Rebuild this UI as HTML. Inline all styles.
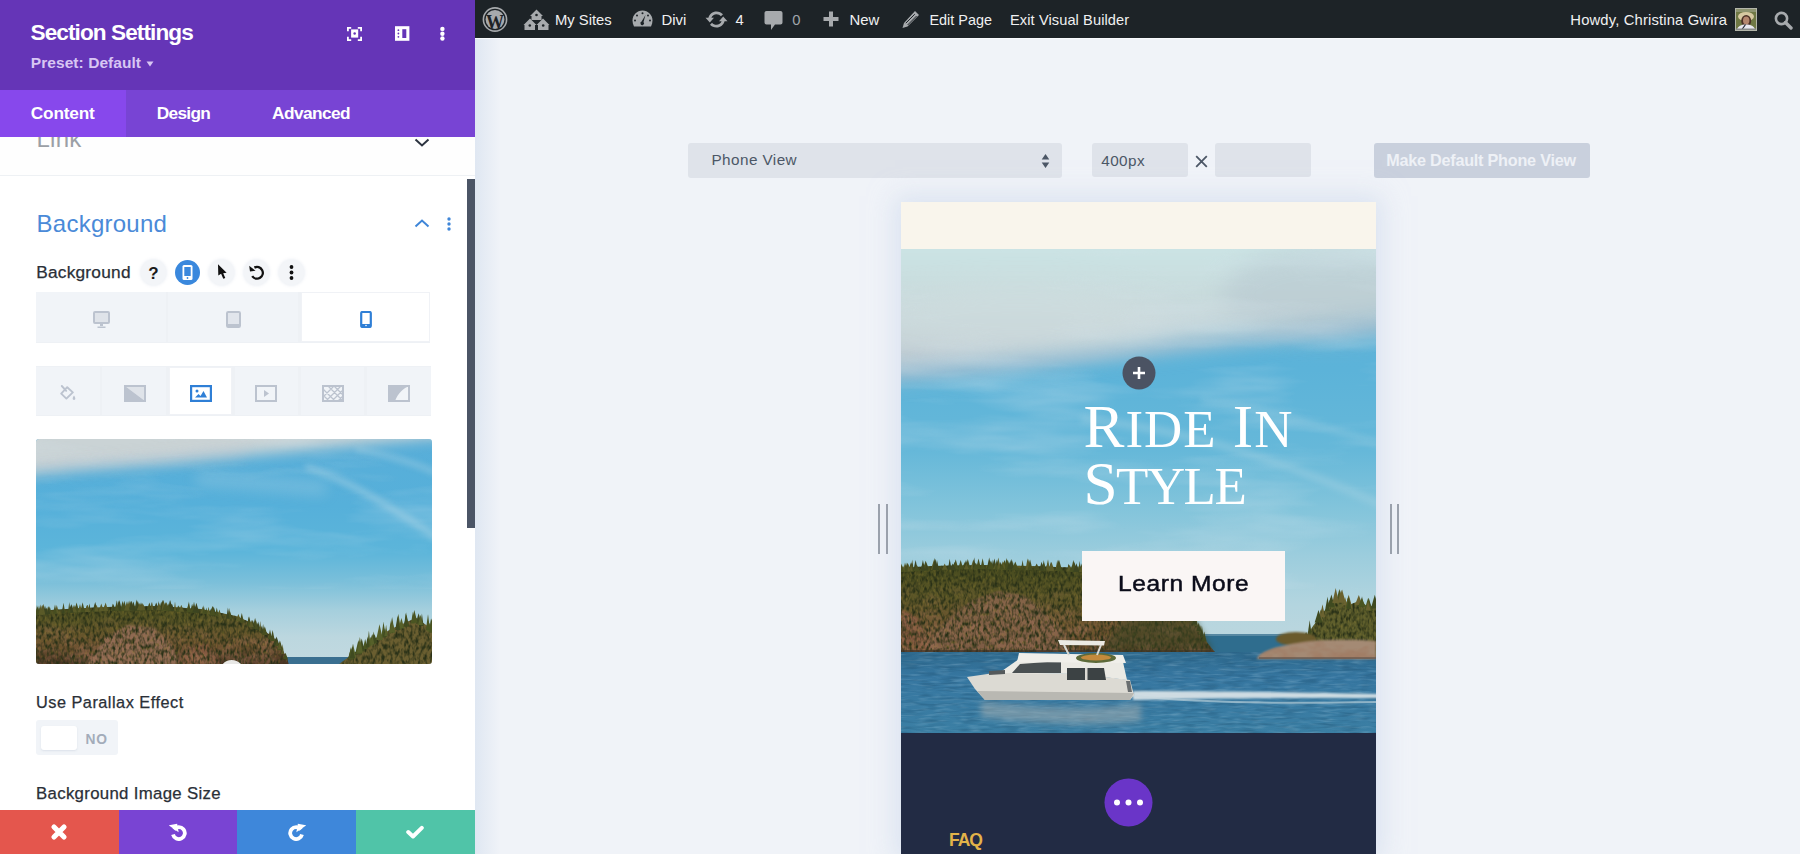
<!DOCTYPE html><html><head><meta charset="utf-8"><style>
html,body{margin:0;padding:0;width:1800px;height:854px;overflow:hidden;background:#f0f3f8;}
.t{position:absolute;white-space:nowrap;line-height:1;}
.r{position:absolute;}
</style></head><body>
<div class="r" style="left:475px;top:38px;width:25px;height:816px;background:linear-gradient(90deg,#dfe7f2,#f0f3f8);"></div>
<div class="r" style="left:475px;top:0px;width:1325px;height:38px;background:#1d2327;"></div>
<div class="r" style="left:475px;top:38px;width:1325px;height:1px;background:#f8fafd;"></div>
<div class="t" style="left:555.00px;top:13.07px;font-size:14.80px;font-weight:400;color:#f0f0f1;letter-spacing:0.00px;font-family:'Liberation Sans';">My Sites</div>
<div class="t" style="left:661.50px;top:12.99px;font-size:14.90px;font-weight:400;color:#f0f0f1;letter-spacing:0.00px;font-family:'Liberation Sans';">Divi</div>
<div class="t" style="left:735.50px;top:13.07px;font-size:14.80px;font-weight:400;color:#f0f0f1;letter-spacing:0.00px;font-family:'Liberation Sans';">4</div>
<div class="t" style="left:792.30px;top:13.07px;font-size:14.80px;font-weight:400;color:#a0a5aa;letter-spacing:0.00px;font-family:'Liberation Sans';">0</div>
<div class="t" style="left:849.50px;top:12.99px;font-size:14.90px;font-weight:400;color:#f0f0f1;letter-spacing:0.00px;font-family:'Liberation Sans';">New</div>
<div class="t" style="left:929.50px;top:13.21px;font-size:14.40px;font-weight:400;color:#f0f0f1;letter-spacing:0.00px;font-family:'Liberation Sans';">Edit Page</div>
<div class="t" style="left:1010.00px;top:13.04px;font-size:14.60px;font-weight:400;color:#f0f0f1;letter-spacing:0.10px;font-family:'Liberation Sans';">Exit Visual Builder</div>
<div class="t" style="left:1570.30px;top:12.87px;font-size:14.80px;font-weight:400;color:#f0f0f1;letter-spacing:0.15px;font-family:'Liberation Sans';">Howdy, Christina Gwira</div>
<svg class="r" style="left:482px;top:7px;" width="26" height="26" viewBox="0 0 26 26"><circle cx="13" cy="12.5" r="11.6" fill="none" stroke="#a7aaad" stroke-width="1.6"/><circle cx="13" cy="12.5" r="9.4" fill="#a7aaad"/><text x="4" y="21.5" font-family="Liberation Serif" font-weight="700" font-size="22" fill="#1d2327" textLength="18" lengthAdjust="spacingAndGlyphs">W</text></svg>
<svg class="r" style="left:523px;top:9px;" width="27" height="22" viewBox="0 0 27 22"><path d="M13.5 0.5 L20 7 L18.5 7 L18.5 11 L8.5 11 L8.5 7 L7 7 Z" fill="#a7aaad"/><circle cx="13.5" cy="6" r="1.3" fill="#1d2327"/><path d="M7 9.5 L13.5 16 L12 16 L12 21 L1.5 21 L1.5 16 L0.5 16 Z" fill="#a7aaad"/><circle cx="6.8" cy="16.5" r="1.3" fill="#1d2327"/><path d="M20 9.5 L26.5 16 L25.5 16 L25.5 21 L15 21 L15 16 L13.5 16 Z" fill="#a7aaad"/><circle cx="20.2" cy="16.5" r="1.3" fill="#1d2327"/></svg>
<svg class="r" style="left:632px;top:10px;" width="21" height="17" viewBox="0 0 21 17"><path d="M10.5 0.5 C16 0.5 20.5 5 20.5 10.5 C20.5 12.5 20 14.5 19 16.5 L2 16.5 C1 14.5 0.5 12.5 0.5 10.5 C0.5 5 5 0.5 10.5 0.5Z" fill="#a7aaad"/><circle cx="10.5" cy="3.2" r="1" fill="#1d2327"/><circle cx="5" cy="5.5" r="1" fill="#1d2327"/><circle cx="16" cy="5.5" r="1" fill="#1d2327"/><circle cx="3" cy="10.5" r="1" fill="#1d2327"/><circle cx="18" cy="10.5" r="1" fill="#1d2327"/><path d="M13.5 5 L11.5 12 A1.8 1.8 0 1 1 9.6 11.6 Z" fill="#1d2327"/></svg>
<svg class="r" style="left:705px;top:10px;" width="23" height="19" viewBox="0 0 23 19"><path d="M11.5 1.5 C7.5 1.5 4.3 4.2 3.4 7.8 L0.5 7.8 L4.8 12.5 L9 7.8 L6.4 7.8 C7.2 5.6 9.2 4.2 11.5 4.2 C13.3 4.2 14.9 5 15.9 6.3 L18 4.3 C16.4 2.6 14.1 1.5 11.5 1.5Z" fill="#a7aaad"/><path d="M11.5 17.5 C15.5 17.5 18.7 14.8 19.6 11.2 L22.5 11.2 L18.2 6.5 L14 11.2 L16.6 11.2 C15.8 13.4 13.8 14.8 11.5 14.8 C9.7 14.8 8.1 14 7.1 12.7 L5 14.7 C6.6 16.4 8.9 17.5 11.5 17.5Z" fill="#a7aaad"/></svg>
<svg class="r" style="left:764px;top:10px;" width="19" height="21" viewBox="0 0 19 21"><path d="M2.5 1 L16.5 1 C17.6 1 18.5 1.9 18.5 3 L18.5 12.5 C18.5 13.6 17.6 14.5 16.5 14.5 L11 14.5 L7 20 L7 14.5 L2.5 14.5 C1.4 14.5 0.5 13.6 0.5 12.5 L0.5 3 C0.5 1.9 1.4 1 2.5 1Z" fill="#a7aaad"/></svg>
<svg class="r" style="left:823px;top:11px;" width="16" height="16" viewBox="0 0 16 16"><path d="M6 0.5 H10 V6 H15.5 V10 H10 V15.5 H6 V10 H0.5 V6 H6Z" fill="#a7aaad"/></svg>
<svg class="r" style="left:901px;top:10px;" width="19" height="19" viewBox="0 0 19 19"><path d="M14 1 L18 5 L6.5 16.5 L1.5 18 L3 13 Z" fill="#a7aaad"/><path d="M4.8 13.2 L13.8 4.2 M6.6 15 L15.6 6" stroke="#1d2327" stroke-width="1"/></svg>
<svg class="r" style="left:1735px;top:8px;" width="22" height="23" viewBox="0 0 22 23"><rect x="0.5" y="0.5" width="21" height="22" fill="#6f7844" stroke="#b4b6aa" stroke-width="1"/><rect x="1" y="1" width="20" height="3" fill="#8d9470"/><ellipse cx="11" cy="8.5" rx="8" ry="4.6" fill="#d6c9a2"/><ellipse cx="11.2" cy="13" rx="5" ry="6" fill="#4a3026"/><ellipse cx="11.2" cy="12.6" rx="3.2" ry="4" fill="#b4866e"/><path d="M2 21.5 C3 18 6 16.5 11 16.5 C16 16.5 19 18 20 21.5Z" fill="#e9e8f0"/><path d="M7 21.5 L10.5 16.5" stroke="#1e2230" stroke-width="1.2"/><rect x="1" y="20.5" width="20" height="1.5" fill="#8a8c8a"/></svg>
<svg class="r" style="left:1774px;top:11px;" width="19" height="19" viewBox="0 0 19 19"><circle cx="7.5" cy="7.5" r="5.6" fill="none" stroke="#a7aaad" stroke-width="2.6"/><path d="M11.5 11.5 L17 17" stroke="#a7aaad" stroke-width="3.4" stroke-linecap="round"/></svg>
<div class="r" style="left:688px;top:143px;width:374px;height:35px;background:#dfe3ea;border-radius:3px;"></div>
<div class="t" style="left:711.50px;top:151.85px;font-size:15.30px;font-weight:400;color:#4c5766;letter-spacing:0.42px;font-family:'Liberation Sans';">Phone View</div>
<svg class="r" style="left:1041px;top:153px;" width="9" height="16" viewBox="0 0 9 16"><path d="M4.5 1 L8.3 6.4 H0.7Z M4.5 15 L8.3 9.6 H0.7Z" fill="#4c5766"/></svg>
<div class="r" style="left:1092px;top:143px;width:96px;height:34px;background:#dfe3ea;border-radius:3px;"></div>
<div class="t" style="left:1101.20px;top:152.55px;font-size:15.30px;font-weight:400;color:#4c5766;letter-spacing:0.44px;font-family:'Liberation Sans';">400px</div>
<svg class="r" style="left:1195px;top:155px;" width="13" height="13" viewBox="0 0 13 13"><path d="M1.2 1.2 L11.8 11.8 M11.8 1.2 L1.2 11.8" stroke="#4c5766" stroke-width="1.8"/></svg>
<div class="r" style="left:1215px;top:143px;width:96px;height:34px;background:#dfe3ea;border-radius:3px;"></div>
<div class="r" style="left:1374px;top:143px;width:216px;height:35px;background:#c9d0dd;border-radius:3px;"></div>
<div class="t" style="left:1386.20px;top:152.29px;font-size:16.20px;font-weight:700;color:#eef1f6;letter-spacing:-0.23px;font-family:'Liberation Sans';">Make Default Phone View</div>
<div class="r" style="left:901px;top:202px;width:475px;height:652px;background:#f9f5ec;box-shadow:0 0 24px 6px rgba(200,214,235,0.55);"></div>
<svg class="r" style="left:901px;top:249px;" width="475" height="484" viewBox="0 0 475 484"><defs>
<linearGradient id="psky" x1="0" y1="0" x2="0" y2="404" gradientUnits="userSpaceOnUse">
<stop offset="0" stop-color="#5cb0d7"/><stop offset="0.3" stop-color="#5cb3d9"/><stop offset="0.5" stop-color="#66b8d9"/>
<stop offset="0.64" stop-color="#82c4db"/><stop offset="0.76" stop-color="#9ccddd"/><stop offset="0.88" stop-color="#b3d5df"/><stop offset="1" stop-color="#bfd7de"/></linearGradient>
<linearGradient id="pcl" x1="0" y1="0" x2="0" y2="135" gradientUnits="userSpaceOnUse">
<stop offset="0" stop-color="#cbe4e5"/><stop offset="0.3" stop-color="#c9dcdd"/><stop offset="0.65" stop-color="#c3d0d4"/><stop offset="1" stop-color="#b9c1cd"/></linearGradient>
<linearGradient id="pwat" x1="0" y1="403" x2="0" y2="484" gradientUnits="userSpaceOnUse">
<stop offset="0" stop-color="#2f6a8e"/><stop offset="0.3" stop-color="#3676a0"/><stop offset="1" stop-color="#3b7fa4"/></linearGradient>
<linearGradient id="pisl" x1="0" y1="316" x2="0" y2="404" gradientUnits="userSpaceOnUse">
<stop offset="0" stop-color="#454a1e"/><stop offset="0.35" stop-color="#5a5626"/><stop offset="0.7" stop-color="#6e5430"/><stop offset="1" stop-color="#5a4028"/></linearGradient>
<filter color-interpolation-filters="sRGB" id="pwtex" x="0" y="0" width="100%" height="100%">
 <feTurbulence type="fractalNoise" baseFrequency="0.06 0.4" numOctaves="2" seed="2" result="n"/>
 <feColorMatrix in="n" type="matrix" values="0 0 0 0 0.75  0 0 0 0 0.86  0 0 0 0 0.92  2.2 0 0 0 -1.05" result="c"/>
 <feComposite in="c" in2="SourceGraphic" operator="in"/>
</filter>
<filter color-interpolation-filters="sRGB" id="pwdark" x="0" y="0" width="100%" height="100%">
 <feTurbulence type="fractalNoise" baseFrequency="0.05 0.35" numOctaves="2" seed="9" result="n"/>
 <feColorMatrix in="n" type="matrix" values="0 0 0 0 0.10  0 0 0 0 0.28  0 0 0 0 0.40  2.4 0 0 0 -1.1" result="c"/>
 <feComposite in="c" in2="SourceGraphic" operator="in"/>
</filter>
<filter color-interpolation-filters="sRGB" id="pcloud" x="0" y="0" width="100%" height="100%">
 <feTurbulence type="fractalNoise" baseFrequency="0.005 0.03" numOctaves="4" seed="33" result="n"/>
 <feColorMatrix in="n" type="matrix" values="0 0 0 0 0.84  0 0 0 0 0.90  0 0 0 0 0.93  2.2 0 0 0 -1.0" result="c"/>
 <feComposite in="c" in2="SourceGraphic" operator="in"/>
</filter>
<filter color-interpolation-filters="sRGB" id="prock2" x="0" y="0" width="100%" height="100%">
 <feTurbulence type="fractalNoise" baseFrequency="0.08 0.12" numOctaves="3" seed="17" result="n"/>
 <feColorMatrix in="n" type="matrix" values="1.1 0 0 0 0.12  0.9 0 0 0 0.02  0.8 0 0 0 -0.02  0 0 0 0 1" result="c"/>
 <feComposite in="c" in2="SourceGraphic" operator="in"/>
</filter>
<linearGradient id="prockg" x1="0" y1="330" x2="0" y2="370" gradientUnits="userSpaceOnUse"><stop offset="0" stop-color="#000"/><stop offset="1" stop-color="#888"/></linearGradient>
<mask id="prockclip" maskUnits="userSpaceOnUse" x="0" y="0" width="475" height="484"><rect x="0" y="0" width="475" height="484" fill="url(#prockg)"/></mask>

<filter color-interpolation-filters="sRGB" id="prock" x="0" y="0" width="100%" height="100%">
 <feTurbulence type="fractalNoise" baseFrequency="0.05 0.08" numOctaves="3" seed="11" result="n"/>
 <feColorMatrix in="n" type="matrix" values="0 0 0 0 0.62  0 0 0 0 0.44  0 0 0 0 0.34  2.6 0 0 0 -1.0" result="c"/>
 <feComposite in="c" in2="SourceGraphic" operator="in"/>
</filter>
<filter color-interpolation-filters="sRGB" id="pdark" x="0" y="0" width="100%" height="100%">
 <feTurbulence type="fractalNoise" baseFrequency="0.35 0.18" numOctaves="2" seed="4" result="n"/>
 <feColorMatrix in="n" type="matrix" values="0 0 0 0 0.16  0 0 0 0 0.19  0 0 0 0 0.09  0 2.6 0 0 -1.0" result="c"/>
 <feComposite in="c" in2="SourceGraphic" operator="in"/>
</filter>
<filter color-interpolation-filters="sRGB" id="phi" x="0" y="0" width="100%" height="100%">
 <feTurbulence type="fractalNoise" baseFrequency="0.45 0.25" numOctaves="1" seed="8" result="n"/>
 <feColorMatrix in="n" type="matrix" values="0 0 0 0 0.60  0 0 0 0 0.52  0 0 0 0 0.20  0 0 2.8 0 -1.5" result="c"/>
 <feComposite in="c" in2="SourceGraphic" operator="in"/>
</filter>
<filter color-interpolation-filters="sRGB" id="pb12" filterUnits="userSpaceOnUse" x="-100" y="-100" width="700" height="700"><feGaussianBlur stdDeviation="12"/></filter>
<filter color-interpolation-filters="sRGB" id="pb8" filterUnits="userSpaceOnUse" x="-100" y="-100" width="700" height="700"><feGaussianBlur stdDeviation="7"/></filter>
<filter color-interpolation-filters="sRGB" id="pb3" filterUnits="userSpaceOnUse" x="-100" y="-100" width="700" height="700"><feGaussianBlur stdDeviation="3"/></filter>
<filter color-interpolation-filters="sRGB" id="pb1" filterUnits="userSpaceOnUse" x="-100" y="-100" width="700" height="700"><feGaussianBlur stdDeviation="1"/></filter>

</defs>
<rect width="475" height="484" fill="url(#psky)"/>
<path d="M-40 -40 H515 V70 C430 78 330 90 237 100 C150 109 70 121 -40 128 Z" fill="url(#pcl)" filter="url(#pb12)"/>
<ellipse cx="120" cy="70" rx="150" ry="35" fill="#d2dfe1" opacity="0.5" filter="url(#pb12)"/>
<ellipse cx="430" cy="45" rx="110" ry="45" fill="#b2c2cc" opacity="0.45" filter="url(#pb12)"/>
<path d="M-40 128 C60 124 150 112 237 102 C320 93 410 82 515 74" stroke="#b9bccb" stroke-width="8" fill="none" filter="url(#pb8)" opacity="0.45"/>
<rect x="0" y="0" width="475" height="340" fill="#000" filter="url(#pcloud)" opacity="0.35"/>
<path d="M180 170 C290 180 390 215 490 260" stroke="#b0d6e4" stroke-width="8" fill="none" filter="url(#pb3)" opacity="0.35"/>
<path d="M300 150 C360 160 420 175 490 200" stroke="#b0d6e4" stroke-width="5" fill="none" filter="url(#pb3)" opacity="0.3"/>
<rect x="295" y="385" width="180" height="22" fill="#2f6d8e"/>
<rect x="295" y="385" width="180" height="2" fill="#7fa3b5" opacity="0.5"/>
<path d="M0 404 L0 319 L0 319 L30 317 L80 316 L130 317 L180 319 L230 325 L265 340 L285 356 L297 377 L305 392 L312 401 L314 403 Z" fill="url(#pisl)"/>
<path d="M20 402 L45 372 L70 352 L98 342 L122 346 L142 362 L160 380 L178 402 Z" fill="#84624a" filter="url(#pb1)" opacity="0.85"/>
<path d="M20 402 L45 372 L70 352 L98 342 L122 346 L142 362 L160 380 L178 402 Z" fill="#000" filter="url(#prock2)" opacity="0.0"/>
<path d="M0 402 L0 360 L18 370 L30 402 Z" fill="#82583e" filter="url(#pb1)"/>
<g mask="url(#prockclip)"><path d="M0 404 L0 319 L0 319 L30 317 L80 316 L130 317 L180 319 L230 325 L265 340 L285 356 L297 377 L305 392 L312 401 L314 403 Z" fill="#000" filter="url(#prock)"/></g>
<path d="M0 404 L0 319 L0 319 L30 317 L80 316 L130 317 L180 319 L230 325 L265 340 L285 356 L297 377 L305 392 L312 401 L314 403 Z" fill="#000" filter="url(#pdark)"/>
<path d="M0 404 L0 319 L0 319 L30 317 L80 316 L130 317 L180 319 L230 325 L265 340 L285 356 L297 377 L305 392 L312 401 L314 403 Z" fill="#000" filter="url(#phi)" opacity="0.45"/>
<path d="M190.0 313.7 L193.1 324.2 L186.9 324.2Z" fill="#3c4420"/><path d="M198.9 316.1 L202.1 325.3 L195.7 325.3Z" fill="#474e20"/><path d="M197.9 313.7 L199.7 325.2 L196.2 325.2Z" fill="#5a5a28"/><path d="M264.9 335.7 L266.6 343.9 L263.2 343.9Z" fill="#474e20"/><path d="M4.0 315.4 L6.1 322.7 L1.9 322.7Z" fill="#5a5a28"/><path d="M48.7 309.8 L50.5 320.6 L46.9 320.6Z" fill="#3c4420"/><path d="M135.7 314.4 L139.1 321.2 L132.2 321.2Z" fill="#474e20"/><path d="M63.9 313.0 L67.3 320.3 L60.4 320.3Z" fill="#474e20"/><path d="M88.2 308.4 L90.8 320.2 L85.7 320.2Z" fill="#3c4420"/><path d="M190.8 317.2 L194.3 324.3 L187.4 324.3Z" fill="#474e20"/><path d="M294.8 365.8 L296.9 377.2 L292.7 377.2Z" fill="#5a5a28"/><path d="M126.5 309.3 L128.6 320.9 L124.5 320.9Z" fill="#5a5a28"/><path d="M91.9 310.6 L93.4 320.2 L90.4 320.2Z" fill="#3c4420"/><path d="M215.8 320.9 L218.1 327.3 L213.6 327.3Z" fill="#5a5a28"/><path d="M146.6 313.8 L149.1 321.7 L144.2 321.7Z" fill="#3c4420"/><path d="M53.7 313.0 L57.1 320.5 L50.3 320.5Z" fill="#3c4420"/><path d="M109.1 312.2 L111.7 320.6 L106.5 320.6Z" fill="#5a5a28"/><path d="M111.7 311.2 L113.2 320.6 L110.2 320.6Z" fill="#474e20"/><path d="M215.9 317.6 L219.3 327.3 L212.5 327.3Z" fill="#474e20"/><path d="M230.5 317.6 L233.9 329.2 L227.1 329.2Z" fill="#5a5a28"/><path d="M156.3 310.7 L158.3 322.1 L154.3 322.1Z" fill="#5a5a28"/><path d="M33.0 310.5 L36.1 320.9 L29.9 320.9Z" fill="#5a5a28"/><path d="M11.2 310.6 L12.9 322.3 L9.5 322.3Z" fill="#5a5a28"/><path d="M156.4 313.9 L158.2 322.1 L154.6 322.1Z" fill="#5a5a28"/><path d="M281.9 348.2 L284.0 357.5 L279.8 357.5Z" fill="#5a5a28"/><path d="M93.4 309.5 L96.1 320.3 L90.6 320.3Z" fill="#3c4420"/><path d="M210.2 314.6 L212.0 326.6 L208.4 326.6Z" fill="#474e20"/><path d="M24.7 311.7 L28.0 321.4 L21.3 321.4Z" fill="#474e20"/><path d="M72.4 310.6 L75.5 320.2 L69.2 320.2Z" fill="#5a5a28"/><path d="M198.5 318.4 L202.0 325.2 L195.1 325.2Z" fill="#3c4420"/><path d="M10.0 313.4 L13.2 322.3 L6.8 322.3Z" fill="#474e20"/><path d="M299.3 375.9 L301.1 385.3 L297.5 385.3Z" fill="#5a5a28"/><path d="M32.5 312.3 L34.3 320.9 L30.7 320.9Z" fill="#5a5a28"/><path d="M89.9 311.5 L93.4 320.2 L86.4 320.2Z" fill="#474e20"/><path d="M297.7 373.6 L300.2 382.3 L295.2 382.3Z" fill="#3c4420"/><path d="M96.9 312.7 L99.3 320.3 L94.5 320.3Z" fill="#474e20"/><path d="M34.3 310.0 L36.9 320.9 L31.8 320.9Z" fill="#474e20"/><path d="M191.2 315.4 L193.4 324.3 L189.0 324.3Z" fill="#474e20"/><path d="M150.0 312.7 L152.6 321.8 L147.4 321.8Z" fill="#3c4420"/><path d="M110.2 309.9 L113.3 320.6 L107.2 320.6Z" fill="#3c4420"/><path d="M179.2 316.8 L181.3 323.0 L177.1 323.0Z" fill="#3c4420"/><path d="M214.9 319.5 L217.3 327.2 L212.4 327.2Z" fill="#3c4420"/><path d="M218.4 315.9 L220.6 327.6 L216.2 327.6Z" fill="#474e20"/><path d="M177.1 316.8 L179.7 322.9 L174.5 322.9Z" fill="#5a5a28"/><path d="M99.4 312.7 L101.5 320.4 L97.3 320.4Z" fill="#3c4420"/><path d="M197.5 314.3 L199.7 325.1 L195.3 325.1Z" fill="#3c4420"/><path d="M105.4 308.9 L107.7 320.5 L103.1 320.5Z" fill="#474e20"/><path d="M265.3 334.1 L268.8 344.3 L261.9 344.3Z" fill="#5a5a28"/><path d="M158.0 312.9 L159.9 322.1 L156.2 322.1Z" fill="#5a5a28"/><path d="M285.9 352.7 L288.8 361.6 L283.0 361.6Z" fill="#3c4420"/><path d="M204.6 317.5 L207.3 326.0 L201.9 326.0Z" fill="#3c4420"/><path d="M157.5 310.5 L159.6 322.1 L155.4 322.1Z" fill="#3c4420"/><path d="M236.3 321.9 L239.2 331.7 L233.3 331.7Z" fill="#474e20"/><path d="M59.7 310.9 L62.4 320.4 L56.9 320.4Z" fill="#474e20"/><path d="M66.8 310.1 L69.6 320.3 L64.0 320.3Z" fill="#474e20"/><path d="M300.9 376.4 L302.7 388.3 L299.0 388.3Z" fill="#474e20"/><path d="M33.8 309.1 L36.3 320.9 L31.3 320.9Z" fill="#3c4420"/><path d="M10.9 313.5 L13.1 322.3 L8.6 322.3Z" fill="#3c4420"/><path d="M22.0 314.3 L24.9 321.5 L19.0 321.5Z" fill="#5a5a28"/><path d="M0.2 314.6 L2.3 323.0 L-1.9 323.0Z" fill="#5a5a28"/><path d="M264.3 333.5 L266.8 343.7 L261.7 343.7Z" fill="#474e20"/><path d="M167.7 314.7 L169.8 322.5 L165.6 322.5Z" fill="#3c4420"/><path d="M103.5 311.0 L106.9 320.5 L100.1 320.5Z" fill="#474e20"/><path d="M127.8 310.1 L130.6 321.0 L125.0 321.0Z" fill="#5a5a28"/><path d="M142.6 314.6 L144.8 321.5 L140.3 321.5Z" fill="#5a5a28"/><path d="M291.9 360.4 L294.7 372.2 L289.2 372.2Z" fill="#5a5a28"/><path d="M250.5 327.8 L252.7 337.8 L248.2 337.8Z" fill="#5a5a28"/><path d="M172.6 313.0 L174.4 322.7 L170.8 322.7Z" fill="#3c4420"/><path d="M267.3 336.5 L269.7 345.9 L265.0 345.9Z" fill="#474e20"/><path d="M150.5 312.9 L153.4 321.8 L147.6 321.8Z" fill="#5a5a28"/><path d="M293.1 362.8 L295.8 374.3 L290.5 374.3Z" fill="#5a5a28"/><path d="M226.0 320.7 L228.0 328.5 L224.0 328.5Z" fill="#474e20"/><path d="M97.3 308.4 L99.8 320.3 L94.9 320.3Z" fill="#5a5a28"/><path d="M43.7 314.6 L46.5 320.7 L40.9 320.7Z" fill="#5a5a28"/><path d="M74.9 313.9 L76.7 320.1 L73.1 320.1Z" fill="#5a5a28"/><path d="M4.0 313.5 L6.1 322.7 L2.0 322.7Z" fill="#5a5a28"/><path d="M238.5 325.2 L240.5 332.6 L236.4 332.6Z" fill="#474e20"/><path d="M220.0 320.1 L222.5 327.8 L217.6 327.8Z" fill="#5a5a28"/><path d="M158.1 310.9 L161.3 322.1 L154.8 322.1Z" fill="#474e20"/><path d="M4.9 315.9 L7.0 322.7 L2.9 322.7Z" fill="#3c4420"/><path d="M102.5 312.7 L105.1 320.5 L100.0 320.5Z" fill="#5a5a28"/><path d="M106.7 310.4 L109.8 320.5 L103.6 320.5Z" fill="#474e20"/><path d="M11.1 314.7 L13.5 322.3 L8.7 322.3Z" fill="#474e20"/><path d="M270.8 339.4 L272.4 348.7 L269.3 348.7Z" fill="#5a5a28"/><path d="M181.4 313.0 L184.8 323.2 L178.0 323.2Z" fill="#3c4420"/><path d="M147.0 310.2 L149.2 321.7 L144.7 321.7Z" fill="#5a5a28"/><path d="M208.1 316.1 L211.4 326.4 L204.8 326.4Z" fill="#5a5a28"/><path d="M253.2 332.5 L256.3 338.9 L250.0 338.9Z" fill="#3c4420"/><path d="M237.6 322.8 L240.4 332.3 L234.8 332.3Z" fill="#5a5a28"/><path d="M277.8 347.3 L280.2 354.2 L275.3 354.2Z" fill="#3c4420"/><path d="M271.1 337.0 L273.6 348.8 L268.5 348.8Z" fill="#5a5a28"/><path d="M178.7 312.1 L180.3 322.9 L177.0 322.9Z" fill="#474e20"/><path d="M81.5 313.5 L83.1 320.0 L79.9 320.0Z" fill="#474e20"/><path d="M101.6 311.9 L103.2 320.4 L99.9 320.4Z" fill="#5a5a28"/><path d="M213.9 320.8 L217.1 327.1 L210.7 327.1Z" fill="#474e20"/><path d="M187.4 312.9 L189.2 323.9 L185.7 323.9Z" fill="#474e20"/><path d="M303.2 382.4 L305.6 392.6 L300.8 392.6Z" fill="#474e20"/><path d="M186.2 315.3 L188.1 323.7 L184.4 323.7Z" fill="#3c4420"/><path d="M65.0 311.0 L67.8 320.3 L62.2 320.3Z" fill="#3c4420"/><path d="M22.0 315.2 L24.6 321.5 L19.3 321.5Z" fill="#3c4420"/><path d="M121.6 311.1 L123.1 320.8 L120.0 320.8Z" fill="#474e20"/><path d="M95.9 310.7 L98.4 320.3 L93.5 320.3Z" fill="#3c4420"/><path d="M114.1 314.3 L117.0 320.7 L111.2 320.7Z" fill="#474e20"/><path d="M173.4 312.7 L175.5 322.7 L171.4 322.7Z" fill="#3c4420"/><path d="M167.7 315.2 L169.3 322.5 L166.1 322.5Z" fill="#474e20"/><path d="M77.5 309.5 L80.1 320.0 L75.0 320.0Z" fill="#474e20"/><path d="M246.4 324.9 L248.9 336.0 L244.0 336.0Z" fill="#5a5a28"/><path d="M54.7 310.2 L57.5 320.5 L51.9 320.5Z" fill="#474e20"/><path d="M174.8 316.6 L178.1 322.8 L171.6 322.8Z" fill="#3c4420"/><path d="M181.2 315.7 L184.4 323.1 L177.9 323.1Z" fill="#5a5a28"/><path d="M293.8 368.8 L296.4 375.4 L291.2 375.4Z" fill="#3c4420"/><path d="M221.1 321.6 L222.9 327.9 L219.3 327.9Z" fill="#5a5a28"/><path d="M207.7 319.0 L209.5 326.3 L206.0 326.3Z" fill="#3c4420"/><path d="M149.9 314.5 L152.8 321.8 L147.0 321.8Z" fill="#5a5a28"/><path d="M108.1 313.2 L110.2 320.6 L105.9 320.6Z" fill="#3c4420"/><path d="M215.1 316.4 L217.4 327.2 L212.9 327.2Z" fill="#3c4420"/><path d="M253.5 329.2 L256.6 339.1 L250.4 339.1Z" fill="#5a5a28"/><path d="M293.2 366.1 L294.8 374.3 L291.6 374.3Z" fill="#3c4420"/><path d="M65.5 313.2 L67.2 320.3 L63.9 320.3Z" fill="#474e20"/><path d="M10.1 315.1 L11.7 322.3 L8.5 322.3Z" fill="#5a5a28"/><path d="M201.7 317.5 L204.0 325.6 L199.3 325.6Z" fill="#5a5a28"/><path d="M271.4 339.4 L273.7 349.1 L269.0 349.1Z" fill="#5a5a28"/><path d="M140.9 314.3 L143.7 321.4 L138.1 321.4Z" fill="#474e20"/><path d="M114.3 312.4 L117.5 320.7 L111.0 320.7Z" fill="#474e20"/><path d="M168.4 315.9 L171.5 322.5 L165.2 322.5Z" fill="#5a5a28"/><path d="M205.0 319.8 L208.2 326.0 L201.7 326.0Z" fill="#5a5a28"/><path d="M282.0 349.4 L285.4 357.6 L278.6 357.6Z" fill="#3c4420"/><path d="M6.6 313.8 L9.8 322.6 L3.4 322.6Z" fill="#474e20"/><path d="M36.0 310.9 L38.0 320.9 L33.9 320.9Z" fill="#3c4420"/><path d="M73.2 308.2 L74.8 320.1 L71.6 320.1Z" fill="#3c4420"/><path d="M7.6 315.1 L9.3 322.5 L5.9 322.5Z" fill="#5a5a28"/><path d="M278.1 344.2 L280.9 354.4 L275.2 354.4Z" fill="#474e20"/><path d="M142.8 313.8 L145.7 321.5 L139.8 321.5Z" fill="#3c4420"/><path d="M142.8 310.9 L144.6 321.5 L140.9 321.5Z" fill="#474e20"/><path d="M286.8 353.4 L289.2 363.2 L284.5 363.2Z" fill="#5a5a28"/><path d="M1.9 316.5 L5.0 322.9 L-1.1 322.9Z" fill="#5a5a28"/><path d="M51.8 314.4 L54.9 320.6 L48.6 320.6Z" fill="#3c4420"/><path d="M172.4 311.1 L175.3 322.7 L169.5 322.7Z" fill="#474e20"/><path d="M274.1 342.4 L277.5 351.3 L270.8 351.3Z" fill="#474e20"/><path d="M208.3 316.5 L210.7 326.4 L205.8 326.4Z" fill="#474e20"/><path d="M14.6 311.0 L17.0 322.0 L12.2 322.0Z" fill="#3c4420"/><path d="M15.7 315.7 L19.1 322.0 L12.2 322.0Z" fill="#474e20"/><path d="M212.2 317.0 L214.1 326.9 L210.3 326.9Z" fill="#474e20"/><path d="M25.7 313.4 L27.4 321.3 L24.0 321.3Z" fill="#3c4420"/><path d="M300.5 380.5 L302.1 387.5 L298.8 387.5Z" fill="#3c4420"/><path d="M65.4 314.2 L68.0 320.3 L62.8 320.3Z" fill="#5a5a28"/><path d="M129.1 310.4 L131.6 321.0 L126.5 321.0Z" fill="#474e20"/><path d="M221.3 316.5 L223.4 328.0 L219.2 328.0Z" fill="#5a5a28"/><path d="M271.9 337.5 L274.5 349.5 L269.3 349.5Z" fill="#474e20"/><path d="M95.1 313.8 L98.1 320.3 L92.0 320.3Z" fill="#5a5a28"/><path d="M95.4 313.5 L97.1 320.3 L93.8 320.3Z" fill="#474e20"/><path d="M212.6 316.1 L216.1 326.9 L209.2 326.9Z" fill="#3c4420"/><path d="M74.8 313.7 L77.7 320.1 L71.9 320.1Z" fill="#474e20"/><path d="M214.6 316.4 L217.9 327.2 L211.3 327.2Z" fill="#474e20"/><path d="M21.9 310.9 L24.2 321.5 L19.7 321.5Z" fill="#3c4420"/><path d="M0.0 315.3 L3.4 323.0 L-3.4 323.0Z" fill="#474e20"/><path d="M175.3 314.2 L178.4 322.8 L172.2 322.8Z" fill="#3c4420"/><path d="M238.3 326.4 L239.9 332.6 L236.7 332.6Z" fill="#5a5a28"/><path d="M81.6 309.2 L83.9 320.0 L79.4 320.0Z" fill="#474e20"/><path d="M98.0 312.5 L99.8 320.4 L96.2 320.4Z" fill="#5a5a28"/><path d="M206.1 318.4 L207.8 326.1 L204.5 326.1Z" fill="#3c4420"/><path d="M170.0 316.4 L171.6 322.6 L168.4 322.6Z" fill="#474e20"/><path d="M252.1 329.8 L254.1 338.5 L250.1 338.5Z" fill="#3c4420"/><path d="M5.1 313.5 L6.8 322.7 L3.3 322.7Z" fill="#474e20"/><path d="M100.8 314.3 L103.4 320.4 L98.1 320.4Z" fill="#474e20"/><path d="M221.7 321.4 L224.2 328.0 L219.1 328.0Z" fill="#474e20"/><path d="M192.3 317.6 L195.4 324.5 L189.3 324.5Z" fill="#5a5a28"/><path d="M242.4 327.6 L244.5 334.3 L240.3 334.3Z" fill="#474e20"/><path d="M140.6 312.8 L143.0 321.4 L138.2 321.4Z" fill="#3c4420"/><path d="M285.6 351.8 L289.0 361.0 L282.1 361.0Z" fill="#3c4420"/>
<path d="M0 401 L311 401 L314 404 L0 405Z" fill="#3e3228" opacity="0.6"/>
<path d="M200 401 L230 360 L270 345 L290 362 L305 390 L312 401Z" fill="#3a4220" opacity="0.55" filter="url(#pb3)"/>
<rect x="0" y="403" width="475" height="81" fill="url(#pwat)"/>
<rect x="0" y="403" width="475" height="81" fill="#000" filter="url(#pwtex)" opacity="0.25"/>
<rect x="0" y="403" width="475" height="81" fill="#000" filter="url(#pwdark)" opacity="0.35"/>
<path d="M396 400 L400 396 L410 380 L420 366 L430 354 L438 347 L448 356 L458 352 L468 358 L475 355 L475 408 Z" fill="#5e5e2c"/>
<path d="M396 400 L400 396 L410 380 L420 366 L430 354 L438 347 L448 356 L458 352 L468 358 L475 355 L475 408 Z" fill="#000" filter="url(#pdark)"/>
<path d="M396 400 L400 396 L410 380 L420 366 L430 354 L438 347 L448 356 L458 352 L468 358 L475 355 L475 408 Z" fill="#000" filter="url(#phi)" opacity="0.4"/>
<path d="M405.1 382.9 L408.8 391.8 L401.4 391.8Z" fill="#3f4a20"/><path d="M408.7 371.3 L410.7 386.1 L406.6 386.1Z" fill="#3f4a20"/><path d="M421.5 355.3 L424.2 368.2 L418.8 368.2Z" fill="#6a6230"/><path d="M420.1 359.9 L422.5 369.9 L417.7 369.9Z" fill="#3f4a20"/><path d="M441.1 340.4 L444.7 353.8 L437.5 353.8Z" fill="#6a6230"/><path d="M429.6 348.7 L433.6 358.5 L425.7 358.5Z" fill="#4a5522"/><path d="M448.3 349.1 L450.6 359.9 L446.0 359.9Z" fill="#4a5522"/><path d="M439.3 343.9 L441.6 352.2 L437.0 352.2Z" fill="#4a5522"/><path d="M457.8 346.1 L461.6 356.1 L453.9 356.1Z" fill="#6a6230"/><path d="M438.4 340.1 L441.5 351.4 L435.3 351.4Z" fill="#4a5522"/><path d="M461.0 347.2 L463.0 357.8 L459.0 357.8Z" fill="#3f4a20"/><path d="M447.4 347.1 L451.0 359.4 L443.7 359.4Z" fill="#4a5522"/><path d="M427.2 353.2 L429.8 361.4 L424.6 361.4Z" fill="#6a6230"/><path d="M440.1 341.1 L443.5 352.9 L436.7 352.9Z" fill="#6a6230"/><path d="M473.8 345.8 L477.6 359.5 L469.9 359.5Z" fill="#3f4a20"/><path d="M444.0 348.0 L446.3 356.4 L441.7 356.4Z" fill="#6a6230"/><path d="M430.4 345.5 L433.8 357.7 L427.0 357.7Z" fill="#3f4a20"/><path d="M419.5 360.7 L421.5 370.7 L417.4 370.7Z" fill="#6a6230"/><path d="M447.7 345.7 L451.6 359.8 L443.9 359.8Z" fill="#6a6230"/><path d="M426.5 347.7 L429.0 362.2 L423.9 362.2Z" fill="#3f4a20"/><path d="M421.4 360.0 L423.6 368.3 L419.2 368.3Z" fill="#6a6230"/><path d="M467.8 349.1 L471.5 361.9 L464.1 361.9Z" fill="#3f4a20"/><path d="M447.4 347.5 L450.4 359.5 L444.4 359.5Z" fill="#4a5522"/><path d="M467.7 352.2 L471.7 361.8 L463.8 361.8Z" fill="#3f4a20"/><path d="M434.7 339.1 L438.0 353.9 L431.3 353.9Z" fill="#6a6230"/><path d="M417.5 361.0 L421.3 373.5 L413.7 373.5Z" fill="#3f4a20"/><path d="M447.9 349.2 L450.2 360.0 L445.7 360.0Z" fill="#3f4a20"/><path d="M467.2 348.7 L471.2 361.5 L463.3 361.5Z" fill="#4a5522"/><path d="M467.1 352.0 L469.7 361.4 L464.5 361.4Z" fill="#6a6230"/><path d="M460.8 349.1 L464.7 357.7 L456.9 357.7Z" fill="#4a5522"/>
<ellipse cx="395" cy="390" rx="20" ry="7" fill="#6a5a2c" filter="url(#pb1)"/>
<path d="M356 409 C362 400 385 395 410 392 C440 390 460 391 475 392 V410 H356Z" fill="#a48a74" filter="url(#pb1)"/>
<path d="M356 409 C362 400 385 395 410 392 C440 390 460 391 475 392 V410 H356Z" fill="#000" filter="url(#prock)" opacity="0.5"/>
<path d="M358 408 H475 V410 H358Z" fill="#5a4a40" opacity="0.5"/>
<path d="M80 452 C120 458 200 462 240 454 L240 472 C200 478 120 474 80 468Z" fill="#a9b0b0" opacity="0.5" filter="url(#pb3)"/>
<path d="M232 442 C300 442 400 443 480 445 L480 449 C400 449 300 449 232 451Z" fill="#dfe7ea" filter="url(#pb1)" opacity="0.9"/>
<path d="M232 447 C290 453 380 455 480 453" stroke="#c8d8e0" stroke-width="2" fill="none" opacity="0.6"/>
<path d="M66 428 L100 423 L180 425 L229 431 L233 446 L229 451 L84 451 L74 440 Z" fill="#dcdad3"/>
<path d="M76 442 L233 444 L229 451 L84 451Z" fill="#b9b8b2"/>
<path d="M98 424 L118 410 L222 413 L226 431 L180 425Z" fill="#ebeae4"/>
<path d="M119 415 L160 412 L160 424 L111 424Z" fill="#4a5052"/>
<path d="M166 419 L203 419 L205 431 L166 431Z" fill="#3c4244"/>
<path d="M184 419 L186.5 419 L186.5 431 L184 431Z" fill="#dcdad4"/>
<path d="M118 404 L222 406 L225 414 L116 413Z" fill="#f0efea"/>
<ellipse cx="195" cy="409" rx="20" ry="5" fill="#5d6a3a"/>
<ellipse cx="195" cy="408.5" rx="15" ry="3" fill="#c48a3c"/>
<path d="M157 391 L204 392 L203 396.5 L159 396Z" fill="#eceae4"/>
<path d="M163 396 L168 406 M200 396 L196 406" stroke="#d8d8d2" stroke-width="2"/>
<path d="M225 432 L229 432 L231 443 L227 443Z" fill="#6a6e70"/>
<path d="M88 422 L104 421 L104 425 L88 426Z" fill="#555a5c"/>
</svg>
<div class="r" style="left:901px;top:733px;width:475px;height:121px;background:#222b44;"></div>
<div class="r" style="left:878px;top:504px;width:2px;height:50px;background:#9aa1ac;"></div>
<div class="r" style="left:886px;top:504px;width:2px;height:50px;background:#9aa1ac;"></div>
<div class="r" style="left:1390px;top:504px;width:2px;height:50px;background:#9aa1ac;"></div>
<div class="r" style="left:1397px;top:504px;width:2px;height:50px;background:#9aa1ac;"></div>
<svg class="r" style="left:1122px;top:356px;" width="34" height="34" viewBox="0 0 34 34"><circle cx="17" cy="17" r="16.5" fill="#4b5363"/><path d="M17 11 V23 M11 17 H23" stroke="#fff" stroke-width="2.6"/></svg>
<div class="t" style="left:1083.5px;top:395.66px;font-family:'Liberation Serif';color:#fff;letter-spacing:1.0px;line-height:61.3px"><span style="font-size:61.3px">R</span><span style="font-size:52.9px">IDE</span><span style="font-size:61.3px"> </span><span style="font-size:52.9px"></span><span style="font-size:61.3px">I</span><span style="font-size:52.9px">N</span></div>
<div class="t" style="left:1083.5px;top:453.16px;font-family:'Liberation Serif';color:#fff;letter-spacing:-1.5px;line-height:61.3px"><span style="font-size:61.3px">S</span><span style="font-size:52.9px">TYLE</span></div>
<div class="r" style="left:1082px;top:551px;width:203px;height:70px;background:#faf6f5;"></div>
<div class="t" style="left:1118.00px;top:573.47px;font-size:22.60px;font-weight:400;color:#0b0c1a;letter-spacing:0.55px;font-family:'Liberation Sans';-webkit-text-stroke:0.5px #0b0c1a;transform:scaleX(1.085);transform-origin:0 0;">Learn More</div>
<svg class="r" style="left:1104px;top:778px;" width="49" height="49" viewBox="0 0 49 49"><circle cx="24.5" cy="24.5" r="24" fill="#6a35c8"/><circle cx="13" cy="24.5" r="3" fill="#fff"/><circle cx="24.5" cy="24.5" r="3" fill="#fff"/><circle cx="36" cy="24.5" r="3" fill="#fff"/></svg>
<div class="t" style="left:949.00px;top:832.19px;font-size:17.50px;font-weight:700;color:#e2b349;letter-spacing:-1.00px;font-family:'Liberation Sans';">FAQ</div>
<div class="r" style="left:0px;top:0px;width:475px;height:854px;background:#ffffff;"></div>
<div class="r" style="left:0px;top:137px;width:475px;height:38px;background:#fefefe;"></div>
<div class="r" style="left:0px;top:175px;width:475px;height:1px;background:#eef1f4;"></div>
<div class="t" style="left:36.50px;top:127.48px;font-size:24.00px;font-weight:400;color:#9ba0a6;letter-spacing:0.26px;font-family:'Liberation Sans';">Link</div>
<div class="r" style="left:0px;top:0px;width:475px;height:90px;background:#6535b7;"></div>
<div class="t" style="left:30.50px;top:21.67px;font-size:22.60px;font-weight:700;color:#ffffff;letter-spacing:-0.92px;font-family:'Liberation Sans';">Section Settings</div>
<div class="t" style="left:30.80px;top:55.08px;font-size:15.50px;font-weight:700;color:#d8c6f3;letter-spacing:0.06px;font-family:'Liberation Sans';">Preset: Default</div>
<svg class="r" style="left:146px;top:61px;" width="8" height="6" viewBox="0 0 8 6"><path d="M0.5 0.5 H7.5 L4 5.5Z" fill="#d8c6f3"/></svg>
<svg class="r" style="left:346px;top:26px;" width="17" height="16" viewBox="0 0 17 16"><path d="M1.9 5.2 V1.9 H5.2 M11.8 1.9 H15.1 V5.2 M15.1 10.8 V14.1 H11.8 M5.2 14.1 H1.9 V10.8" stroke="#fff" stroke-width="1.8" fill="none"/><rect x="5.1" y="3.4" width="7.1" height="8.2" fill="#fff"/><circle cx="8.65" cy="7.5" r="1.25" fill="#6535b7"/></svg>
<svg class="r" style="left:394px;top:26px;" width="16" height="16" viewBox="0 0 16 16"><rect x="1" y="0.2" width="14.4" height="14.6" fill="#fff"/><rect x="8.3" y="3.2" width="4" height="8.8" fill="#6535b7"/><circle cx="4.4" cy="4.2" r="0.9" fill="#6535b7"/><circle cx="4.4" cy="7.5" r="0.9" fill="#6535b7"/><circle cx="4.4" cy="10.8" r="0.9" fill="#6535b7"/></svg>
<svg class="r" style="left:439px;top:26px;" width="7" height="16" viewBox="0 0 7 16"><circle cx="3.4" cy="2.9" r="2.2" fill="#fff"/><circle cx="3.4" cy="7.7" r="2.2" fill="#fff"/><circle cx="3.4" cy="12.5" r="2.2" fill="#fff"/></svg>
<div class="r" style="left:0px;top:90px;width:475px;height:47px;background:#7844d4;"></div>
<div class="r" style="left:0px;top:90px;width:126px;height:47px;background:#8748ec;"></div>
<div class="t" style="left:30.80px;top:105.36px;font-size:17.30px;font-weight:700;color:#ffffff;letter-spacing:-0.22px;font-family:'Liberation Sans';">Content</div>
<div class="t" style="left:156.80px;top:105.36px;font-size:17.30px;font-weight:700;color:#ffffff;letter-spacing:-0.73px;font-family:'Liberation Sans';">Design</div>
<div class="t" style="left:272.10px;top:105.36px;font-size:17.30px;font-weight:700;color:#ffffff;letter-spacing:-0.58px;font-family:'Liberation Sans';">Advanced</div>
<svg class="r" style="left:414px;top:138px;" width="16" height="10" viewBox="0 0 16 10"><path d="M1.5 1.5 L8 7.5 L14.5 1.5" stroke="#2c3440" stroke-width="2" fill="none"/></svg>
<div class="t" style="left:36.50px;top:211.58px;font-size:24.00px;font-weight:400;color:#4a8ad8;letter-spacing:0.26px;font-family:'Liberation Sans';">Background</div>
<svg class="r" style="left:414px;top:219px;" width="16" height="10" viewBox="0 0 16 10"><path d="M1.5 7.5 L8 1.5 L14.5 7.5" stroke="#3f86d8" stroke-width="2" fill="none"/></svg>
<svg class="r" style="left:446px;top:217px;" width="6" height="14" viewBox="0 0 6 14"><circle cx="3" cy="2" r="1.7" fill="#3f86d8"/><circle cx="3" cy="7" r="1.7" fill="#3f86d8"/><circle cx="3" cy="12" r="1.7" fill="#3f86d8"/></svg>
<div class="t" style="left:36.20px;top:263.96px;font-size:17.30px;font-weight:400;color:#2a2f37;letter-spacing:0.23px;font-family:'Liberation Sans';-webkit-text-stroke:0.25px #2a2f37;">Background</div>
<div class="r" style="left:140.5px;top:260.0px;width:25px;height:25px;border-radius:50%;background:#f3f5f8;box-shadow:0 0 3px 1px rgba(235,238,244,0.9)"></div>
<svg class="r" style="left:140.5px;top:260.0px;" width="25" height="25" viewBox="0 0 25 25"><text x="12.5" y="18.5" text-anchor="middle" font-family="Liberation Sans" font-weight="700" font-size="17" fill="#1a1a1a">?</text></svg>
<div class="r" style="left:175px;top:260px;width:25px;height:25px;border-radius:50%;background:#3a88dd"></div>
<svg class="r" style="left:175px;top:260px;" width="25" height="25" viewBox="0 0 25 25"><rect x="7.5" y="5" width="10" height="15" rx="1.5" fill="#fff"/><rect x="9.3" y="7" width="6.4" height="9" fill="#3a88dd"/><circle cx="12.5" cy="18" r="0.9" fill="#3a88dd"/></svg>
<div class="r" style="left:209.0px;top:260.0px;width:25px;height:25px;border-radius:50%;background:#f3f5f8;box-shadow:0 0 3px 1px rgba(235,238,244,0.9)"></div>
<svg class="r" style="left:209.0px;top:260.0px;" width="25" height="25" viewBox="0 0 25 25"><path d="M9 4.3 L9.3 15.6 L12.1 13.7 L14.3 18.8 L16.3 17.9 L14.2 13.3 L17.6 12.7 Z" fill="#111"/></svg>
<div class="r" style="left:244.0px;top:260.0px;width:25px;height:25px;border-radius:50%;background:#f3f5f8;box-shadow:0 0 3px 1px rgba(235,238,244,0.9)"></div>
<svg class="r" style="left:244.0px;top:260.0px;" width="25" height="25" viewBox="0 0 25 25"><path d="M8.2 16.1 A5.8 5.8 0 1 0 10.4 7.6" stroke="#111" stroke-width="2.4" fill="none"/><path d="M5.2 5.8 L6 11.4 L11.5 10.8 Z" fill="#111"/></svg>
<div class="r" style="left:278.5px;top:260.0px;width:25px;height:25px;border-radius:50%;background:#f3f5f8;box-shadow:0 0 3px 1px rgba(235,238,244,0.9)"></div>
<svg class="r" style="left:278.5px;top:260.0px;" width="25" height="25" viewBox="0 0 25 25"><circle cx="12.5" cy="7" r="1.9" fill="#111"/><circle cx="12.5" cy="12.5" r="1.9" fill="#111"/><circle cx="12.5" cy="18" r="1.9" fill="#111"/></svg>
<div class="r" style="left:36px;top:292px;width:394px;height:51px;background:#eef1f5;"></div>
<div class="r" style="left:36px;top:292px;width:130px;height:50px;background:#f1f4f8;"></div>
<div class="r" style="left:168px;top:292px;width:130px;height:50px;background:#f1f4f8;"></div>
<div class="r" style="left:301px;top:292px;width:129px;height:50px;background:#ffffff;box-shadow:inset 0 0 0 1px #f0f2f6;"></div>
<svg class="r" style="left:93px;top:311px;" width="17" height="18" viewBox="0 0 17 18"><rect x="1" y="1" width="15" height="11" rx="1" stroke="#bcc3cf" stroke-width="2" fill="none"/><rect x="2" y="2" width="13" height="9" fill="#bcc3cf" opacity="0.35"/><path d="M7 12 H10 V15 H7Z M4.5 15.5 H12.5 V17 H4.5Z" fill="#bcc3cf"/></svg>
<svg class="r" style="left:226px;top:311px;" width="15" height="17" viewBox="0 0 15 17"><rect x="1" y="1" width="13" height="15" rx="1.2" stroke="#bcc3cf" stroke-width="2" fill="none"/><rect x="2" y="2" width="11" height="11" fill="#bcc3cf" opacity="0.3"/><rect x="1" y="13" width="13" height="3" fill="#bcc3cf"/></svg>
<svg class="r" style="left:360px;top:311px;" width="12" height="17" viewBox="0 0 12 17"><rect x="1.2" y="1" width="9.6" height="15" rx="1.2" stroke="#2f7fd6" stroke-width="2.2" fill="none"/><rect x="1" y="13" width="10" height="3" fill="#2f7fd6"/><circle cx="6" cy="14.5" r="0.8" fill="#fff"/></svg>
<div class="r" style="left:36px;top:366px;width:395px;height:50px;background:#eef1f5;"></div>
<div class="r" style="left:36px;top:367px;width:64px;height:48px;background:#f1f4f8;"></div>
<div class="r" style="left:102px;top:367px;width:64px;height:48px;background:#f1f4f8;"></div>
<div class="r" style="left:169px;top:367px;width:63px;height:48px;background:#ffffff;box-shadow:inset 0 0 0 1px #f0f2f6;"></div>
<div class="r" style="left:235px;top:367px;width:63px;height:48px;background:#f1f4f8;"></div>
<div class="r" style="left:301px;top:367px;width:63px;height:48px;background:#f1f4f8;"></div>
<div class="r" style="left:367px;top:367px;width:64px;height:48px;background:#f1f4f8;"></div>
<svg class="r" style="left:60px;top:384px;" width="18" height="18" viewBox="0 0 18 18"><path d="M1.2 9.6 L7.2 3.2 L12.8 8.4 L6.4 14.6 Z" stroke="#bcc3cf" stroke-width="1.9" fill="none" stroke-linejoin="round"/><path d="M1.8 2 L6.2 6.8" stroke="#bcc3cf" stroke-width="1.9" stroke-linecap="round"/><path d="M14 11.4 C15 13 15.6 14 15.2 15.2 C14.8 16.2 13.2 16.2 12.8 15.2 C12.4 14 13 13 14 11.4Z" fill="#bcc3cf"/></svg>
<svg class="r" style="left:124px;top:385px;" width="22" height="17" viewBox="0 0 22 17"><rect x="1" y="1" width="20" height="15" stroke="#bcc3cf" stroke-width="2" fill="none"/><path d="M1 1 L21 16 L1 16Z" fill="#bcc3cf"/><path d="M1 1 L21 1 L21 16Z" fill="#bcc3cf" opacity="0.35"/></svg>
<svg class="r" style="left:190px;top:385px;" width="22" height="17" viewBox="0 0 22 17"><rect x="1.1" y="1.1" width="19.8" height="14.8" stroke="#2f7fd6" stroke-width="2.2" fill="none"/><circle cx="7" cy="6" r="1.5" fill="#2f7fd6"/><path d="M5 12.5 L8.5 9 L10.5 11 L13.5 6 L17 12.5Z" fill="#2f7fd6"/></svg>
<svg class="r" style="left:255px;top:385px;" width="22" height="17" viewBox="0 0 22 17"><rect x="1" y="1" width="20" height="15" stroke="#bcc3cf" stroke-width="2" fill="none"/><path d="M9 5 L14 8.5 L9 12Z" fill="#bcc3cf"/></svg>
<svg class="r" style="left:322px;top:385px;" width="22" height="17" viewBox="0 0 22 17"><rect x="1" y="1" width="20" height="15" stroke="#bcc3cf" stroke-width="2" fill="none"/><path d="M1 4 L13 16 M6 1 L21 16 M12 1 L21 10 M1 10 L7 16 M1 12 L12 1 M4 16 L19 1 M10 16 L21 5 M16 16 L21 11" stroke="#bcc3cf" stroke-width="1.3"/></svg>
<svg class="r" style="left:388px;top:385px;" width="22" height="17" viewBox="0 0 22 17"><rect x="1" y="1" width="20" height="15" stroke="#bcc3cf" stroke-width="2" fill="none"/><path d="M1 1 H21 C16 3 10 8 7 16 H1Z" fill="#bcc3cf"/></svg>
<div class="r" style="left:36px;top:439px;width:396px;height:225px;border-radius:3px;overflow:hidden;">
<svg width="396" height="225" viewBox="0 0 396 225" style="display:block"><defs>
<linearGradient id="lsky" x1="0" y1="0" x2="0" y2="225" gradientUnits="userSpaceOnUse">
<stop offset="0" stop-color="#58aed9"/><stop offset="0.3" stop-color="#56b0da"/><stop offset="0.5" stop-color="#5cb5da"/>
<stop offset="0.64" stop-color="#7cc0da"/><stop offset="0.76" stop-color="#a5cfdd"/><stop offset="0.88" stop-color="#bcd7df"/><stop offset="1" stop-color="#c2d9e0"/></linearGradient>
<linearGradient id="lisl" x1="0" y1="160" x2="0" y2="225" gradientUnits="userSpaceOnUse">
<stop offset="0" stop-color="#454a1e"/><stop offset="0.35" stop-color="#5a5626"/><stop offset="0.7" stop-color="#6e5430"/><stop offset="1" stop-color="#4a3424"/></linearGradient>
<linearGradient id="lrockg" x1="0" y1="175" x2="0" y2="205" gradientUnits="userSpaceOnUse"><stop offset="0" stop-color="#000"/><stop offset="1" stop-color="#888"/></linearGradient><mask id="lrockclip" maskUnits="userSpaceOnUse" x="0" y="0" width="396" height="225"><rect x="0" y="0" width="396" height="225" fill="url(#lrockg)"/></mask>

<filter color-interpolation-filters="sRGB" id="lrock" x="0" y="0" width="100%" height="100%">
 <feTurbulence type="fractalNoise" baseFrequency="0.05 0.08" numOctaves="3" seed="11" result="n"/>
 <feColorMatrix in="n" type="matrix" values="0 0 0 0 0.62  0 0 0 0 0.44  0 0 0 0 0.34  2.6 0 0 0 -1.0" result="c"/>
 <feComposite in="c" in2="SourceGraphic" operator="in"/>
</filter>
<filter color-interpolation-filters="sRGB" id="ldark" x="0" y="0" width="100%" height="100%">
 <feTurbulence type="fractalNoise" baseFrequency="0.35 0.18" numOctaves="2" seed="4" result="n"/>
 <feColorMatrix in="n" type="matrix" values="0 0 0 0 0.16  0 0 0 0 0.19  0 0 0 0 0.09  0 2.6 0 0 -1.0" result="c"/>
 <feComposite in="c" in2="SourceGraphic" operator="in"/>
</filter>
<filter color-interpolation-filters="sRGB" id="lhi" x="0" y="0" width="100%" height="100%">
 <feTurbulence type="fractalNoise" baseFrequency="0.45 0.25" numOctaves="1" seed="8" result="n"/>
 <feColorMatrix in="n" type="matrix" values="0 0 0 0 0.60  0 0 0 0 0.52  0 0 0 0 0.20  0 0 2.8 0 -1.5" result="c"/>
 <feComposite in="c" in2="SourceGraphic" operator="in"/>
</filter>
<filter color-interpolation-filters="sRGB" id="lb12" filterUnits="userSpaceOnUse" x="-100" y="-100" width="700" height="700"><feGaussianBlur stdDeviation="12"/></filter>
<filter color-interpolation-filters="sRGB" id="lb8" filterUnits="userSpaceOnUse" x="-100" y="-100" width="700" height="700"><feGaussianBlur stdDeviation="7"/></filter>
<filter color-interpolation-filters="sRGB" id="lb3" filterUnits="userSpaceOnUse" x="-100" y="-100" width="700" height="700"><feGaussianBlur stdDeviation="3"/></filter>
<filter color-interpolation-filters="sRGB" id="lb1" filterUnits="userSpaceOnUse" x="-100" y="-100" width="700" height="700"><feGaussianBlur stdDeviation="1"/></filter>

</defs>
<rect width="396" height="225" fill="url(#lsky)"/>
<filter color-interpolation-filters="sRGB" id="lcloud" x="0" y="0" width="100%" height="100%">
 <feTurbulence type="fractalNoise" baseFrequency="0.006 0.035" numOctaves="4" seed="21" result="n"/>
 <feColorMatrix in="n" type="matrix" values="0 0 0 0 0.84  0 0 0 0 0.90  0 0 0 0 0.93  2.2 0 0 0 -1.0" result="c"/>
 <feComposite in="c" in2="SourceGraphic" operator="in"/>
</filter>
<path d="M-40 -40 H436 V-4 C330 4 220 16 130 24 C70 28 20 32 -40 38 Z" fill="#cad3d5" filter="url(#lb8)"/>
<path d="M-40 30 C40 28 120 20 210 12" stroke="#bcbfcc" stroke-width="8" fill="none" filter="url(#lb8)" opacity="0.3"/>
<rect x="0" y="0" width="396" height="150" fill="#000" filter="url(#lcloud)" opacity="0.28"/>
<path d="M270 28 C310 40 350 65 400 98" stroke="#b6d8e6" stroke-width="6" fill="none" filter="url(#lb3)" opacity="0.5"/>
<path d="M160 40 C200 42 240 46 290 50" stroke="#b0d4e4" stroke-width="12" fill="none" filter="url(#lb8)" opacity="0.35"/>
<path d="M320 10 C350 16 380 24 400 34" stroke="#b4d6e4" stroke-width="5" fill="none" filter="url(#lb3)" opacity="0.45"/>
<rect x="240" y="218" width="80" height="10" fill="#3a6f90"/>
<path d="M0 230 L0 172 L0 172 L30 170 L70 168 L120 167 L165 170 L200 177 L222 187 L238 199 L246 210 L251 219 L254 230 Z" fill="url(#lisl)"/>
<path d="M50 226 L70 198 L92 186 L118 189 L135 206 L145 226Z" fill="#8e6a52" filter="url(#lb1)"/>
<path d="M140 226 L152 208 L170 204 L185 226Z" fill="#82583e" filter="url(#lb1)"/>
<g mask="url(#lrockclip)"><path d="M0 230 L0 172 L0 172 L30 170 L70 168 L120 167 L165 170 L200 177 L222 187 L238 199 L246 210 L251 219 L254 230 Z" fill="#000" filter="url(#lrock)"/></g>
<path d="M0 230 L0 172 L0 172 L30 170 L70 168 L120 167 L165 170 L200 177 L222 187 L238 199 L246 210 L251 219 L254 230 Z" fill="#000" filter="url(#ldark)"/>
<path d="M0 230 L0 172 L0 172 L30 170 L70 168 L120 167 L165 170 L200 177 L222 187 L238 199 L246 210 L251 219 L254 230 Z" fill="#000" filter="url(#lhi)" opacity="0.45"/>
<path d="M115.8 163.2 L117.2 171.1 L114.3 171.1Z" fill="#3c4420"/><path d="M1.6 167.4 L4.4 175.9 L-1.2 175.9Z" fill="#474e20"/><path d="M83.5 161.0 L86.0 171.7 L81.0 171.7Z" fill="#3c4420"/><path d="M94.8 162.0 L96.8 171.5 L92.7 171.5Z" fill="#3c4420"/><path d="M105.6 164.4 L106.9 171.3 L104.4 171.3Z" fill="#474e20"/><path d="M126.6 160.8 L128.8 171.4 L124.3 171.4Z" fill="#3c4420"/><path d="M95.9 161.8 L97.3 171.5 L94.5 171.5Z" fill="#5a5a28"/><path d="M51.2 165.8 L53.9 172.9 L48.6 172.9Z" fill="#474e20"/><path d="M193.1 169.1 L195.1 179.6 L191.2 179.6Z" fill="#5a5a28"/><path d="M202.4 175.1 L205.2 182.1 L199.6 182.1Z" fill="#5a5a28"/><path d="M13.7 167.2 L15.8 175.1 L11.6 175.1Z" fill="#474e20"/><path d="M59.2 162.9 L61.9 172.5 L56.5 172.5Z" fill="#3c4420"/><path d="M1.0 166.1 L2.5 175.9 L-0.6 175.9Z" fill="#474e20"/><path d="M82.6 161.3 L84.0 171.7 L81.1 171.7Z" fill="#474e20"/><path d="M125.2 162.5 L127.4 171.3 L123.0 171.3Z" fill="#474e20"/><path d="M105.0 163.3 L107.4 171.3 L102.7 171.3Z" fill="#474e20"/><path d="M175.2 169.3 L178.1 176.0 L172.3 176.0Z" fill="#3c4420"/><path d="M239.6 198.9 L241.8 205.2 L237.4 205.2Z" fill="#3c4420"/><path d="M213.0 177.2 L215.5 186.9 L210.5 186.9Z" fill="#3c4420"/><path d="M249.5 213.7 L252.0 220.3 L247.0 220.3Z" fill="#474e20"/><path d="M40.4 165.0 L43.0 173.5 L37.9 173.5Z" fill="#3c4420"/><path d="M130.5 162.9 L133.0 171.7 L128.1 171.7Z" fill="#5a5a28"/><path d="M27.5 163.8 L29.3 174.2 L25.6 174.2Z" fill="#474e20"/><path d="M100.5 160.5 L102.8 171.4 L98.3 171.4Z" fill="#474e20"/><path d="M94.7 162.5 L95.9 171.5 L93.5 171.5Z" fill="#474e20"/><path d="M53.4 164.6 L55.1 172.8 L51.6 172.8Z" fill="#474e20"/><path d="M76.8 164.4 L78.9 171.9 L74.7 171.9Z" fill="#474e20"/><path d="M6.3 165.7 L9.0 175.6 L3.7 175.6Z" fill="#5a5a28"/><path d="M86.5 161.8 L88.7 171.7 L84.3 171.7Z" fill="#474e20"/><path d="M106.3 164.1 L109.2 171.3 L103.3 171.3Z" fill="#5a5a28"/><path d="M127.5 160.7 L129.7 171.5 L125.3 171.5Z" fill="#474e20"/><path d="M166.9 167.5 L169.6 174.4 L164.2 174.4Z" fill="#5a5a28"/><path d="M7.3 164.8 L10.0 175.5 L4.7 175.5Z" fill="#5a5a28"/><path d="M236.6 191.0 L238.9 202.0 L234.3 202.0Z" fill="#474e20"/><path d="M12.2 166.9 L14.8 175.2 L9.6 175.2Z" fill="#5a5a28"/><path d="M152.9 162.4 L154.7 173.2 L151.0 173.2Z" fill="#474e20"/><path d="M120.2 163.6 L123.2 171.0 L117.3 171.0Z" fill="#3c4420"/><path d="M139.0 162.8 L140.3 172.3 L137.7 172.3Z" fill="#5a5a28"/><path d="M35.6 164.9 L38.3 173.7 L33.0 173.7Z" fill="#3c4420"/><path d="M221.8 184.1 L224.3 190.9 L219.3 190.9Z" fill="#3c4420"/><path d="M220.1 181.6 L221.4 190.1 L218.7 190.1Z" fill="#474e20"/><path d="M69.2 165.4 L71.8 172.0 L66.6 172.0Z" fill="#474e20"/><path d="M40.6 163.5 L43.3 173.5 L37.8 173.5Z" fill="#474e20"/><path d="M44.0 165.0 L46.2 173.3 L41.8 173.3Z" fill="#5a5a28"/><path d="M20.8 165.9 L23.1 174.6 L18.5 174.6Z" fill="#5a5a28"/><path d="M133.9 161.2 L135.1 171.9 L132.6 171.9Z" fill="#3c4420"/><path d="M222.2 182.5 L224.4 191.2 L220.1 191.2Z" fill="#3c4420"/><path d="M160.4 163.7 L163.2 173.7 L157.6 173.7Z" fill="#3c4420"/><path d="M135.5 164.5 L138.0 172.0 L133.0 172.0Z" fill="#3c4420"/><path d="M34.4 167.3 L36.4 173.8 L32.3 173.8Z" fill="#474e20"/><path d="M122.6 162.0 L123.8 171.2 L121.3 171.2Z" fill="#3c4420"/><path d="M7.3 168.3 L9.3 175.5 L5.3 175.5Z" fill="#5a5a28"/><path d="M205.8 174.0 L208.1 183.6 L203.5 183.6Z" fill="#474e20"/><path d="M9.0 166.4 L11.3 175.4 L6.7 175.4Z" fill="#3c4420"/><path d="M102.4 162.4 L103.8 171.4 L101.1 171.4Z" fill="#474e20"/><path d="M152.0 166.2 L153.3 173.1 L150.7 173.1Z" fill="#5a5a28"/><path d="M156.1 164.7 L158.2 173.4 L154.1 173.4Z" fill="#3c4420"/><path d="M193.9 172.1 L196.5 179.8 L191.3 179.8Z" fill="#474e20"/><path d="M116.0 162.8 L117.4 171.1 L114.5 171.1Z" fill="#5a5a28"/><path d="M246.6 204.9 L248.0 215.0 L245.2 215.0Z" fill="#5a5a28"/><path d="M167.8 166.3 L169.2 174.6 L166.4 174.6Z" fill="#474e20"/><path d="M27.2 167.9 L28.5 174.2 L25.9 174.2Z" fill="#3c4420"/><path d="M244.0 203.5 L246.6 211.3 L241.5 211.3Z" fill="#5a5a28"/><path d="M156.6 166.4 L159.4 173.4 L153.9 173.4Z" fill="#474e20"/><path d="M59.0 165.3 L61.2 172.5 L56.9 172.5Z" fill="#474e20"/><path d="M3.9 168.5 L6.2 175.7 L1.6 175.7Z" fill="#474e20"/><path d="M129.9 163.6 L132.7 171.7 L127.0 171.7Z" fill="#5a5a28"/><path d="M212.9 177.8 L214.5 186.9 L211.3 186.9Z" fill="#474e20"/><path d="M170.3 168.4 L171.6 175.1 L169.0 175.1Z" fill="#474e20"/><path d="M243.9 201.2 L246.7 211.1 L241.1 211.1Z" fill="#474e20"/><path d="M219.1 179.1 L222.1 189.7 L216.2 189.7Z" fill="#474e20"/><path d="M7.4 167.3 L9.3 175.5 L5.4 175.5Z" fill="#5a5a28"/><path d="M122.9 163.5 L125.6 171.2 L120.2 171.2Z" fill="#5a5a28"/><path d="M107.5 164.9 L109.3 171.2 L105.8 171.2Z" fill="#5a5a28"/><path d="M152.6 164.3 L154.6 173.2 L150.6 173.2Z" fill="#474e20"/><path d="M82.4 165.5 L83.7 171.8 L81.0 171.8Z" fill="#5a5a28"/><path d="M136.0 165.1 L138.5 172.1 L133.5 172.1Z" fill="#3c4420"/><path d="M224.2 181.9 L225.5 192.6 L222.8 192.6Z" fill="#5a5a28"/><path d="M240.6 197.6 L243.5 206.5 L237.7 206.5Z" fill="#3c4420"/><path d="M183.4 170.6 L185.6 177.7 L181.2 177.7Z" fill="#5a5a28"/><path d="M19.0 165.4 L20.9 174.7 L17.0 174.7Z" fill="#474e20"/><path d="M216.7 181.0 L219.4 188.6 L214.0 188.6Z" fill="#3c4420"/><path d="M125.6 163.1 L126.8 171.4 L124.4 171.4Z" fill="#3c4420"/><path d="M51.3 165.8 L54.2 172.9 L48.3 172.9Z" fill="#5a5a28"/><path d="M10.5 168.6 L12.0 175.3 L9.0 175.3Z" fill="#474e20"/><path d="M127.4 161.5 L129.3 171.5 L125.5 171.5Z" fill="#5a5a28"/><path d="M97.4 162.5 L100.1 171.5 L94.6 171.5Z" fill="#3c4420"/><path d="M172.6 167.7 L174.2 175.5 L170.9 175.5Z" fill="#5a5a28"/><path d="M228.8 187.2 L231.4 196.1 L226.1 196.1Z" fill="#474e20"/><path d="M142.7 166.5 L145.1 172.5 L140.3 172.5Z" fill="#474e20"/><path d="M69.6 163.4 L72.2 172.0 L67.1 172.0Z" fill="#5a5a28"/><path d="M227.1 185.0 L228.7 194.8 L225.4 194.8Z" fill="#474e20"/><path d="M129.2 163.2 L132.2 171.6 L126.2 171.6Z" fill="#474e20"/><path d="M82.8 162.0 L84.6 171.7 L80.9 171.7Z" fill="#3c4420"/><path d="M12.7 167.8 L14.5 175.2 L10.9 175.2Z" fill="#3c4420"/><path d="M46.6 163.3 L49.0 173.2 L44.2 173.2Z" fill="#474e20"/><path d="M113.4 163.4 L115.9 171.1 L110.8 171.1Z" fill="#474e20"/><path d="M225.6 186.6 L227.2 193.7 L224.0 193.7Z" fill="#3c4420"/><path d="M142.2 166.4 L144.4 172.5 L140.0 172.5Z" fill="#474e20"/><path d="M234.0 190.5 L236.1 200.0 L231.9 200.0Z" fill="#474e20"/><path d="M93.1 161.5 L95.9 171.5 L90.3 171.5Z" fill="#5a5a28"/><path d="M158.0 162.7 L160.2 173.5 L155.8 173.5Z" fill="#474e20"/><path d="M241.0 200.7 L242.9 207.2 L239.2 207.2Z" fill="#474e20"/><path d="M191.9 168.5 L193.4 179.4 L190.3 179.4Z" fill="#3c4420"/><path d="M3.0 166.5 L4.8 175.8 L1.2 175.8Z" fill="#474e20"/><path d="M243.7 204.0 L245.0 210.9 L242.4 210.9Z" fill="#3c4420"/><path d="M145.3 165.7 L148.0 172.7 L142.6 172.7Z" fill="#5a5a28"/><path d="M176.8 168.7 L178.7 176.4 L174.9 176.4Z" fill="#474e20"/><path d="M101.5 161.5 L103.5 171.4 L99.4 171.4Z" fill="#3c4420"/><path d="M10.5 168.4 L11.9 175.3 L9.0 175.3Z" fill="#3c4420"/><path d="M177.7 167.4 L180.4 176.5 L175.1 176.5Z" fill="#3c4420"/><path d="M95.4 161.7 L98.2 171.5 L92.6 171.5Z" fill="#3c4420"/><path d="M38.0 165.7 L41.0 173.6 L35.1 173.6Z" fill="#5a5a28"/><path d="M35.0 165.7 L37.6 173.7 L32.5 173.7Z" fill="#3c4420"/><path d="M159.0 167.1 L161.9 173.6 L156.1 173.6Z" fill="#3c4420"/><path d="M65.3 164.4 L67.8 172.2 L62.7 172.2Z" fill="#5a5a28"/><path d="M134.2 161.0 L136.8 171.9 L131.7 171.9Z" fill="#3c4420"/><path d="M132.2 164.3 L134.9 171.8 L129.4 171.8Z" fill="#474e20"/><path d="M215.2 180.9 L217.7 187.9 L212.7 187.9Z" fill="#5a5a28"/><path d="M77.6 164.7 L79.1 171.8 L76.1 171.8Z" fill="#3c4420"/><path d="M103.7 164.0 L106.6 171.3 L100.8 171.3Z" fill="#5a5a28"/><path d="M80.8 161.2 L83.0 171.8 L78.6 171.8Z" fill="#474e20"/><path d="M33.3 163.0 L34.6 173.8 L31.9 173.8Z" fill="#474e20"/><path d="M4.8 165.5 L7.3 175.7 L2.4 175.7Z" fill="#5a5a28"/><path d="M88.3 161.8 L91.1 171.6 L85.4 171.6Z" fill="#474e20"/><path d="M176.5 166.7 L179.4 176.3 L173.6 176.3Z" fill="#474e20"/><path d="M60.6 165.7 L62.8 172.5 L58.3 172.5Z" fill="#5a5a28"/><path d="M91.0 162.3 L93.8 171.6 L88.2 171.6Z" fill="#5a5a28"/><path d="M180.8 168.6 L182.7 177.2 L178.8 177.2Z" fill="#474e20"/><path d="M243.5 203.0 L245.5 210.6 L241.5 210.6Z" fill="#5a5a28"/>
<path d="M298 230 L302 226 L318 214 L335 202 L355 190 L380 179 L396 190 L396 230 Z" fill="#6a5e30"/>
<path d="M298 230 L302 226 L318 214 L335 202 L355 190 L380 179 L396 190 L396 230 Z" fill="#000" filter="url(#ldark)"/>
<path d="M347.5 182.7 L349.9 198.5 L345.2 198.5Z" fill="#4a5522"/><path d="M314.9 209.5 L317.9 220.3 L311.9 220.3Z" fill="#3f4a20"/><path d="M329.2 200.0 L331.6 210.1 L326.8 210.1Z" fill="#4a5522"/><path d="M395.5 179.2 L398.0 193.6 L392.9 193.6Z" fill="#3f4a20"/><path d="M325.7 199.4 L328.8 212.5 L322.6 212.5Z" fill="#3f4a20"/><path d="M337.7 192.4 L339.9 204.4 L335.6 204.4Z" fill="#4a5522"/><path d="M343.5 185.3 L347.0 200.9 L340.1 200.9Z" fill="#56602a"/><path d="M324.5 205.2 L326.6 213.4 L322.4 213.4Z" fill="#4a5522"/><path d="M354.6 181.5 L356.1 194.2 L353.1 194.2Z" fill="#56602a"/><path d="M362.5 179.6 L364.6 190.7 L360.5 190.7Z" fill="#4a5522"/><path d="M393.6 183.8 L396.2 192.4 L391.1 192.4Z" fill="#56602a"/><path d="M322.4 200.9 L325.7 214.9 L319.1 214.9Z" fill="#4a5522"/><path d="M336.2 195.0 L339.2 205.3 L333.3 205.3Z" fill="#3f4a20"/><path d="M365.4 178.9 L368.3 189.4 L362.5 189.4Z" fill="#56602a"/><path d="M315.0 208.0 L317.9 220.2 L312.1 220.2Z" fill="#4a5522"/><path d="M317.0 204.7 L320.2 218.7 L313.8 218.7Z" fill="#56602a"/><path d="M316.4 207.4 L319.1 219.2 L313.7 219.2Z" fill="#3f4a20"/><path d="M362.4 174.8 L364.9 190.7 L360.0 190.7Z" fill="#56602a"/><path d="M356.1 178.0 L358.7 193.5 L353.4 193.5Z" fill="#4a5522"/><path d="M370.5 175.7 L373.2 187.2 L367.8 187.2Z" fill="#3f4a20"/><path d="M370.1 173.2 L372.0 187.3 L368.3 187.3Z" fill="#4a5522"/><path d="M382.6 174.2 L385.6 184.8 L379.6 184.8Z" fill="#3f4a20"/><path d="M392.0 175.2 L394.1 191.2 L389.8 191.2Z" fill="#4a5522"/><path d="M323.9 198.0 L326.8 213.8 L321.0 213.8Z" fill="#56602a"/><path d="M338.5 195.3 L341.5 203.9 L335.4 203.9Z" fill="#3f4a20"/><path d="M334.4 197.7 L337.0 206.4 L331.8 206.4Z" fill="#56602a"/><path d="M378.3 170.9 L381.5 183.7 L375.2 183.7Z" fill="#4a5522"/><path d="M336.3 195.4 L338.4 205.2 L334.2 205.2Z" fill="#56602a"/><path d="M348.9 189.3 L350.8 197.7 L347.0 197.7Z" fill="#3f4a20"/><path d="M385.9 174.5 L387.6 187.1 L384.3 187.1Z" fill="#3f4a20"/><path d="M384.5 175.8 L387.0 186.1 L382.0 186.1Z" fill="#56602a"/><path d="M376.9 172.8 L378.7 184.4 L375.0 184.4Z" fill="#4a5522"/><path d="M332.9 191.6 L334.6 207.5 L331.2 207.5Z" fill="#4a5522"/><path d="M331.6 197.4 L333.5 208.4 L329.6 208.4Z" fill="#3f4a20"/><path d="M369.8 174.1 L371.7 187.5 L367.9 187.5Z" fill="#3f4a20"/><path d="M356.2 182.2 L359.1 193.5 L353.3 193.5Z" fill="#56602a"/><path d="M350.1 185.7 L351.8 196.9 L348.4 196.9Z" fill="#56602a"/><path d="M395.0 179.5 L396.9 193.3 L393.1 193.3Z" fill="#4a5522"/><path d="M362.1 179.8 L364.5 190.9 L359.7 190.9Z" fill="#4a5522"/><path d="M361.6 176.6 L363.9 191.1 L359.3 191.1Z" fill="#3f4a20"/>
<path d="M186 226 C190 220 200 219 206 226Z" fill="#e8e8e6"/>
</svg></div>
<div class="t" style="left:36.00px;top:693.90px;font-size:16.30px;font-weight:400;color:#2a2f37;letter-spacing:0.50px;font-family:'Liberation Sans';-webkit-text-stroke:0.25px #2a2f37;">Use Parallax Effect</div>
<div class="r" style="left:36px;top:720px;width:82px;height:35px;background:#f1f4f8;border-radius:3px;"></div>
<div class="r" style="left:41px;top:726px;width:36px;height:24px;background:#ffffff;border-radius:3px;box-shadow:0 1px 2px rgba(180,190,205,0.35);"></div>
<div class="t" style="left:85.40px;top:733.02px;font-size:13.80px;font-weight:700;color:#a3acba;letter-spacing:0.86px;font-family:'Liberation Sans';">NO</div>
<div class="t" style="left:36.00px;top:785.58px;font-size:16.80px;font-weight:400;color:#2a2f37;letter-spacing:0.32px;font-family:'Liberation Sans';-webkit-text-stroke:0.25px #2a2f37;">Background Image Size</div>
<div class="r" style="left:467px;top:179px;width:8px;height:349px;background:#4b5566;"></div>
<div class="r" style="left:0px;top:810px;width:119px;height:44px;background:#e4564d;"></div>
<div class="r" style="left:119px;top:810px;width:118px;height:44px;background:#7944d3;"></div>
<div class="r" style="left:237px;top:810px;width:119px;height:44px;background:#3e87da;"></div>
<div class="r" style="left:356px;top:810px;width:119px;height:44px;background:#50c4a8;"></div>
<svg class="r" style="left:50px;top:823px;" width="18" height="18" viewBox="0 0 18 18"><path d="M4 4 L14 14 M14 4 L4 14" stroke="#fff" stroke-width="5.2" stroke-linecap="round"/></svg>
<svg class="r" style="left:169px;top:823px;" width="18" height="18" viewBox="0 0 18 18"><path d="M5 6.5 A6 6 0 1 1 4 11.5" stroke="#fff" stroke-width="3.8" fill="none"/><path d="M0.5 1.5 L9 1.5 L9 10 Z" fill="#fff" transform="rotate(-10 5 6)"/></svg>
<svg class="r" style="left:288px;top:823px;" width="18" height="18" viewBox="0 0 18 18"><path d="M13 6.5 A6 6 0 1 0 14 11.5" stroke="#fff" stroke-width="3.8" fill="none"/><path d="M17.5 1.5 L9 1.5 L9 10 Z" fill="#fff" transform="rotate(10 13 6)"/></svg>
<svg class="r" style="left:406px;top:825px;" width="18" height="14" viewBox="0 0 18 14"><path d="M2.2 7 L7 11.5 L15.8 2.8" stroke="#fff" stroke-width="4" fill="none" stroke-linecap="round" stroke-linejoin="round"/></svg>
</body></html>
